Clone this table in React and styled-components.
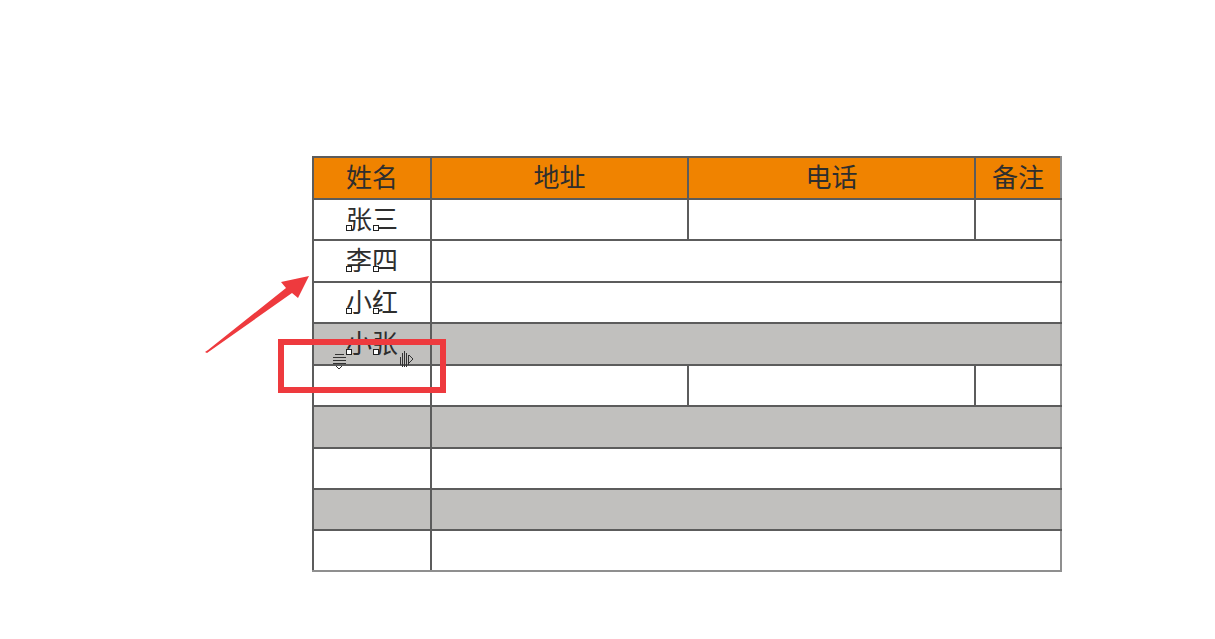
import styled, { createGlobalStyle } from 'styled-components'

const GlobalStyle = createGlobalStyle`
  html, body {
    margin: 0;
    background: #ffffff;
    font-family: "Noto Sans CJK SC", "Noto Sans", sans-serif;
  }
`

const Page = styled.div`
  position: relative;
  width: 1215px;
  height: 639px;
  padding: 156px 0 0 312px;
  box-sizing: border-box;
  overflow: hidden;
`

const Table = styled.table`
  border-collapse: collapse;
  table-layout: fixed;
  width: 748px;
`

const Row = styled.tr`
  height: ${({ $h }) => $h}px;
  background: ${({ $tone }) =>
    $tone === 'head' ? '#f08300' : $tone === 'gray' ? '#c1c0be' : '#ffffff'};

  &:last-child td {
    border-bottom-color: #8f8f8f;
  }
`

const Cell = styled.td`
  padding: 0 0 4px;
  border: 2px solid #5c5c5c;
  text-align: center;
  vertical-align: middle;
  font-size: 26px;
  line-height: 1;
  color: #2e2e2e;

  &:last-child {
    border-right-color: #8f8f8f;
  }
`

const Name = styled.span`
  position: relative;
  display: inline-block;
`

const Anchor = styled.i`
  position: absolute;
  bottom: 0;
  left: ${({ $x }) => $x}px;
  width: 4px;
  height: 4px;
  border: 1px solid #222;
  background: #fff;
`

const Overlay = styled.svg`
  position: absolute;
  left: 0;
  top: 0;
  pointer-events: none;
`

const Frame = styled.div`
  position: absolute;
  left: 278px;
  top: 339px;
  width: 168px;
  height: 54px;
  box-sizing: border-box;
  border: 6px solid #ee3a3e;
`

function Person({ text }) {
  return (
    <Name>
      {text}
      <Anchor $x={0} />
      <Anchor $x={27} />
    </Name>
  )
}

const cols = [118, 257, 287, 86]

const rows = [
  { h: 41, tone: 'white', name: '张三', split: true },
  { h: 42, tone: 'white', name: '李四' },
  { h: 41, tone: 'white', name: '小红' },
  { h: 42, tone: 'gray', name: '小张' },
  { h: 41, tone: 'white', split: true },
  { h: 42, tone: 'gray' },
  { h: 41, tone: 'white' },
  { h: 41, tone: 'gray' },
  { h: 41, tone: 'white' },
]

export default function App() {
  return (
    <Page>
      <GlobalStyle />
      <Table>
        <colgroup>
          {cols.map((w, i) => <col key={i} style={{ width: w }} />)}
        </colgroup>
        <tbody>
          <Row $h={42} $tone="head">
            <Cell>姓名</Cell>
            <Cell>地址</Cell>
            <Cell>电话</Cell>
            <Cell>备注</Cell>
          </Row>
          {rows.map((r, i) => (
            <Row key={i} $h={r.h} $tone={r.tone}>
              <Cell>{r.name && <Person text={r.name} />}</Cell>
              {r.split ? (
                <>
                  <Cell />
                  <Cell />
                  <Cell />
                </>
              ) : (
                <Cell colSpan={3} />
              )}
            </Row>
          ))}
        </tbody>
      </Table>

      <Frame />

      <Overlay width="1215" height="639" viewBox="0 0 1215 639">
        <path
          d="M205 352 L208 350 L286 288 L281 282 L309 276 L298 298 L292 293 L207 353 Z"
          fill="#ee3a3e"
        />
        <g stroke="#333" strokeWidth="1" fill="none" shapeRendering="crispEdges">
          <path d="M335 354.5 h9 M333 357.5 h13 M333 360.5 h13 M333 363.5 h13" />
        </g>
        <path d="M336 366 l3 3 l3 -3" stroke="#333" strokeWidth="1" fill="none" />
        <g stroke="#333" strokeWidth="1" fill="none" shapeRendering="crispEdges">
          <path d="M400.5 357 v8 M402.5 353 v14 M404.5 351 v16 M406.5 353 v14 M408.5 355 v10" />
        </g>
        <path d="M409 355 l4 4 l-4 4" stroke="#333" strokeWidth="1" fill="none" />
      </Overlay>
    </Page>
  )
}
